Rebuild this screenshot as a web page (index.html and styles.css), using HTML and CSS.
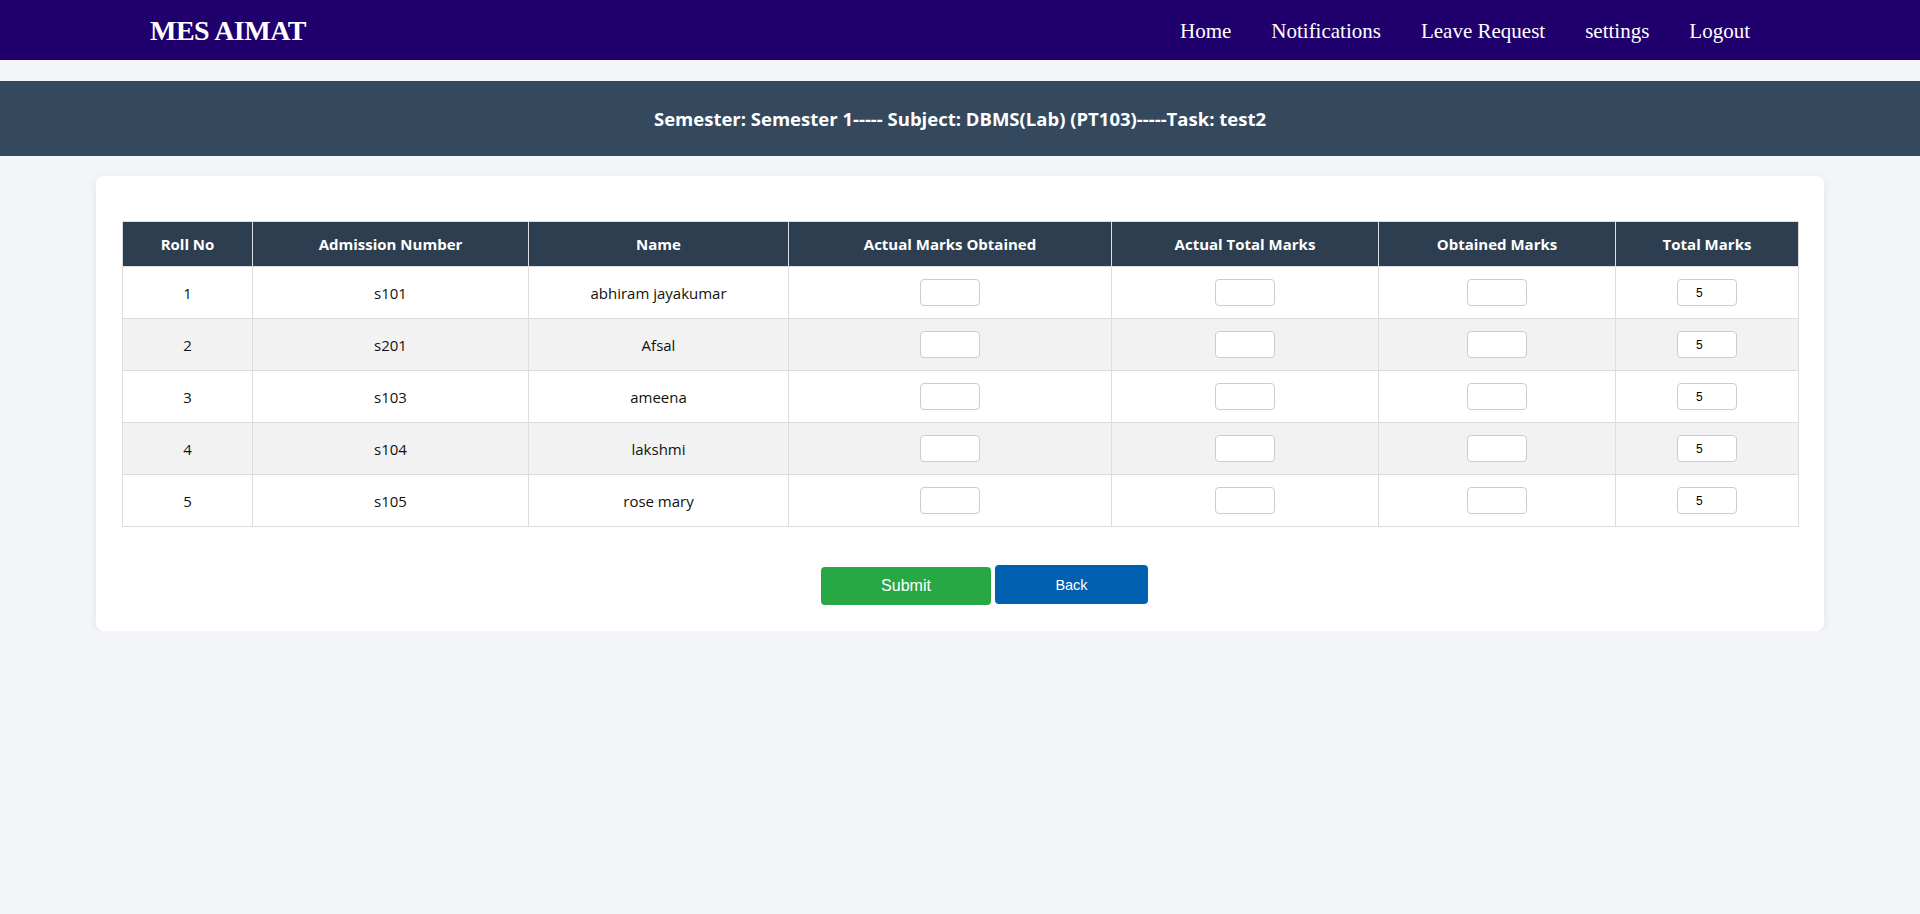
FILE: index.html
```html
<!DOCTYPE html>
<html lang="en">
<head>
<meta charset="utf-8">
<title>MES AIMAT - Marks Entry</title>
<link rel="stylesheet" href="styles.css">
</head>
<body>
<nav class="navbar">
  <div class="logo">MES AIMAT</div>
  <ul class="nav-links">
    <li><a href="#">Home</a></li>
    <li><a href="#">Notifications</a></li>
    <li><a href="#">Leave Request</a></li>
    <li><a href="#">settings</a></li>
    <li><a href="#">Logout</a></li>
  </ul>
</nav>
<header class="band">Semester: Semester 1----- Subject: DBMS(Lab) (PT103)-----Task: test2</header>
<main class="card">
  <table class="marks">
    <colgroup>
      <col class="c-roll"><col class="c-adm"><col class="c-name"><col class="c-amo"><col class="c-atm"><col class="c-om"><col class="c-tm">
    </colgroup>
    <thead>
      <tr><th>Roll No</th><th>Admission Number</th><th>Name</th><th>Actual Marks Obtained</th><th>Actual Total Marks</th><th>Obtained Marks</th><th>Total Marks</th></tr>
    </thead>
    <tbody>
      <tr><td>1</td><td>s101</td><td>abhiram jayakumar</td><td><input class="mk" type="text"></td><td><input class="mk" type="text"></td><td><input class="mk" type="text"></td><td><input class="mk tot" type="text" value="5"></td></tr>
      <tr><td>2</td><td>s201</td><td>Afsal</td><td><input class="mk" type="text"></td><td><input class="mk" type="text"></td><td><input class="mk" type="text"></td><td><input class="mk tot" type="text" value="5"></td></tr>
      <tr><td>3</td><td>s103</td><td>ameena</td><td><input class="mk" type="text"></td><td><input class="mk" type="text"></td><td><input class="mk" type="text"></td><td><input class="mk tot" type="text" value="5"></td></tr>
      <tr><td>4</td><td>s104</td><td>lakshmi</td><td><input class="mk" type="text"></td><td><input class="mk" type="text"></td><td><input class="mk" type="text"></td><td><input class="mk tot" type="text" value="5"></td></tr>
      <tr><td>5</td><td>s105</td><td>rose mary</td><td><input class="mk" type="text"></td><td><input class="mk" type="text"></td><td><input class="mk" type="text"></td><td><input class="mk tot" type="text" value="5"></td></tr>
    </tbody>
  </table>
  <div class="actions">
    <button class="btn submit" type="button">Submit</button>
    <button class="btn back" type="button">Back</button>
  </div>
</main>
</body>
</html>
```
FILE: styles.css
```css
* { box-sizing: border-box; }
body {
  margin: 0;
  background: #f4f5f9;
  font-family: "Open Sans", "Noto Sans", sans-serif;
  color: #111;
}
.navbar {
  height: 60px;
  background: #20006c;
  display: flex;
  align-items: center;
  justify-content: space-between;
  padding: 0 150px;
}
.logo {
  font-family: "Liberation Serif", serif;
  font-weight: bold;
  font-size: 28px;
  color: #fff;
  letter-spacing: -0.5px;
  margin-top: 2px;
}
.nav-links {
  list-style: none;
  margin: 0;
  padding: 0;
  display: flex;
}
.nav-links a {
  display: block;
  padding: 0 20px;
  font-family: "Liberation Serif", serif;
  font-size: 21px;
  color: #fff;
  text-decoration: none;
  margin-top: 3px;
}
.band {
  margin-top: 21px;
  height: 75px;
  background: #34495e;
  color: #fff;
  font-weight: bold;
  font-size: 18.5px;
  display: flex;
  align-items: center;
  justify-content: center;
  padding-bottom: 1px;
}
.card {
  display: block;
  margin: 20px 96px 0;
  background: #fff;
  border-radius: 8px;
  box-shadow: 0 2px 8px rgba(0, 0, 0, 0.08);
  padding: 45px 26px 26px;
}
.marks {
  width: 100%;
  border-collapse: collapse;
  table-layout: fixed;
  font-size: 15px;
}
.c-roll { width: 130px; }
.c-adm { width: 276px; }
.c-name { width: 260px; }
.c-amo { width: 323px; }
.c-atm { width: 267px; }
.c-om { width: 237px; }
.c-tm { width: 183px; }
.marks th {
  background: #2c3e50;
  color: #fff;
  font-weight: bold;
  font-size: 15px;
  height: 45px;
  border: 1px solid #ddd;
  text-align: center;
  padding: 0 6px;
}
.marks td {
  height: 52px;
  border: 1px solid #ddd;
  text-align: center;
  padding: 0 6px;
  color: #111;
}
.marks tbody tr:nth-child(even) td { background: #f2f2f2; }
.mk {
  width: 60px;
  height: 27px;
  border: 1px solid #ccc;
  border-radius: 4px;
  background: #fff;
  font-family: "Liberation Sans", Arial, sans-serif;
  font-size: 12px;
  color: #000;
  padding: 0 4px 0 18px;
  vertical-align: middle;
  outline: none;
}
.actions {
  display: flex;
  justify-content: center;
  align-items: flex-start;
  gap: 4px;
  margin-top: 38px;
  padding-left: 49px;
}
.btn {
  border: none;
  color: #fff;
  border-radius: 4px;
  font-family: "Liberation Sans", Arial, sans-serif;
  cursor: pointer;
}
.submit {
  background: #28a745;
  width: 170px;
  height: 38px;
  font-size: 16px;
  margin-top: 2px;
}
.back {
  background: #0260b0;
  width: 153px;
  height: 39px;
  font-size: 14.5px;
}
```
